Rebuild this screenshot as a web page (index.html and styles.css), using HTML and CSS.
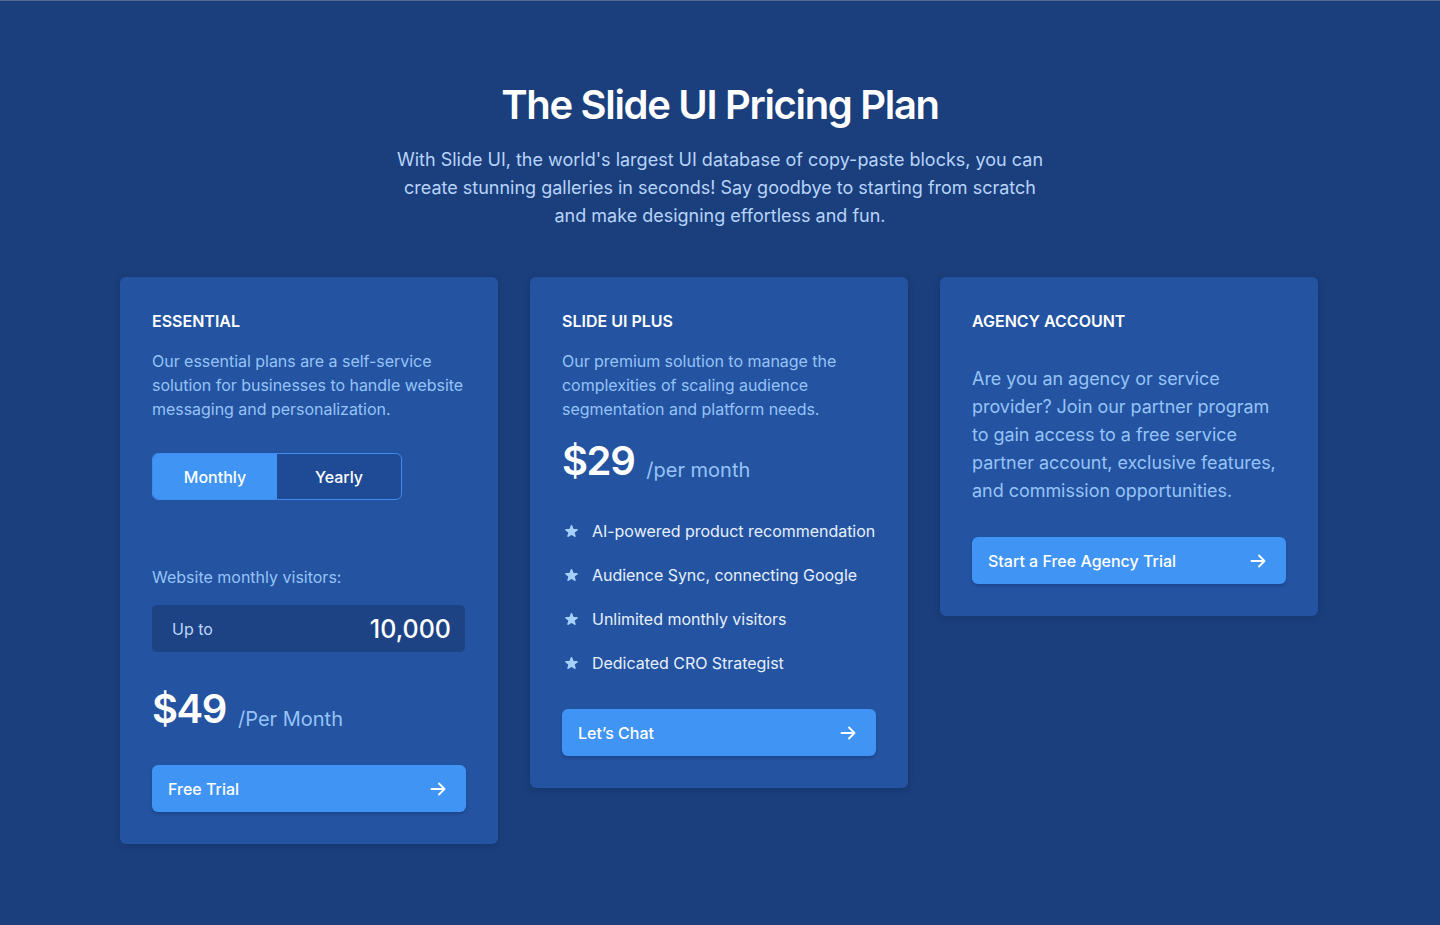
FILE: index.html
```html
<!DOCTYPE html>
<html lang="en">
<head>
<meta charset="utf-8">
<title>The Slide UI Pricing Plan</title>
<link rel="stylesheet" href="styles.css">
</head>
<body>
<section class="pricing">
  <header class="intro">
    <h1 class="intro-title">The Slide UI Pricing Plan</h1>
    <p class="intro-text">With Slide UI, the world's largest UI database of copy-paste blocks, you can create stunning galleries in seconds! Say goodbye to starting from scratch and make designing effortless and fun.</p>
  </header>
  <div class="cards">
    <article class="card">
      <h2 class="card-title">ESSENTIAL</h2>
      <p class="card-desc">Our essential plans are a self-service solution for businesses to handle website messaging and personalization.</p>
      <div class="toggle">
        <button class="toggle-btn active">Monthly</button>
        <button class="toggle-btn">Yearly</button>
      </div>
      <p class="visitors-label">Website monthly visitors:</p>
      <div class="visitors-box">
        <span class="visitors-up">Up to</span>
        <span class="visitors-num">10,000</span>
      </div>
      <div class="price price-essential">
        <span class="price-amount">$49</span>
        <span class="price-period">/Per Month</span>
      </div>
      <a class="cta cta-essential" href="#">
        <span>Free Trial</span>
        <svg class="arrow" width="20" height="20" viewBox="0 0 20 20" fill="none" stroke="currentColor" stroke-width="1.8" stroke-linecap="round" stroke-linejoin="round"><path d="M3.5 10h13M11 4.5l5.5 5.5-5.5 5.5"/></svg>
      </a>
    </article>

    <article class="card">
      <h2 class="card-title">SLIDE UI PLUS</h2>
      <p class="card-desc">Our premium solution to manage the complexities of scaling audience segmentation and platform needs.</p>
      <div class="price price-plus">
        <span class="price-amount">$29</span>
        <span class="price-period">/per month</span>
      </div>
      <ul class="features">
        <li class="feature"><svg class="star" width="17" height="17" viewBox="0 0 20 20" fill="currentColor"><path d="M9.05 2.93c.3-.92 1.6-.92 1.9 0l1.07 3.3a1 1 0 0 0 .95.69h3.47c.97 0 1.37 1.24.59 1.81l-2.81 2.04a1 1 0 0 0-.36 1.12l1.07 3.3c.3.92-.76 1.69-1.54 1.12l-2.8-2.04a1 1 0 0 0-1.18 0l-2.8 2.04c-.79.57-1.84-.2-1.54-1.12l1.07-3.3a1 1 0 0 0-.36-1.12L2.97 8.73c-.78-.57-.38-1.81.59-1.81h3.47a1 1 0 0 0 .95-.69l1.07-3.3z"/></svg><span>AI-powered product recommendation</span></li>
        <li class="feature"><svg class="star" width="17" height="17" viewBox="0 0 20 20" fill="currentColor"><path d="M9.05 2.93c.3-.92 1.6-.92 1.9 0l1.07 3.3a1 1 0 0 0 .95.69h3.47c.97 0 1.37 1.24.59 1.81l-2.81 2.04a1 1 0 0 0-.36 1.12l1.07 3.3c.3.92-.76 1.69-1.54 1.12l-2.8-2.04a1 1 0 0 0-1.18 0l-2.8 2.04c-.79.57-1.84-.2-1.54-1.12l1.07-3.3a1 1 0 0 0-.36-1.12L2.97 8.73c-.78-.57-.38-1.81.59-1.81h3.47a1 1 0 0 0 .95-.69l1.07-3.3z"/></svg><span>Audience Sync, connecting Google</span></li>
        <li class="feature"><svg class="star" width="17" height="17" viewBox="0 0 20 20" fill="currentColor"><path d="M9.05 2.93c.3-.92 1.6-.92 1.9 0l1.07 3.3a1 1 0 0 0 .95.69h3.47c.97 0 1.37 1.24.59 1.81l-2.81 2.04a1 1 0 0 0-.36 1.12l1.07 3.3c.3.92-.76 1.69-1.54 1.12l-2.8-2.04a1 1 0 0 0-1.18 0l-2.8 2.04c-.79.57-1.84-.2-1.54-1.12l1.07-3.3a1 1 0 0 0-.36-1.12L2.97 8.73c-.78-.57-.38-1.81.59-1.81h3.47a1 1 0 0 0 .95-.69l1.07-3.3z"/></svg><span>Unlimited monthly visitors</span></li>
        <li class="feature"><svg class="star" width="17" height="17" viewBox="0 0 20 20" fill="currentColor"><path d="M9.05 2.93c.3-.92 1.6-.92 1.9 0l1.07 3.3a1 1 0 0 0 .95.69h3.47c.97 0 1.37 1.24.59 1.81l-2.81 2.04a1 1 0 0 0-.36 1.12l1.07 3.3c.3.92-.76 1.69-1.54 1.12l-2.8-2.04a1 1 0 0 0-1.18 0l-2.8 2.04c-.79.57-1.84-.2-1.54-1.12l1.07-3.3a1 1 0 0 0-.36-1.12L2.97 8.73c-.78-.57-.38-1.81.59-1.81h3.47a1 1 0 0 0 .95-.69l1.07-3.3z"/></svg><span>Dedicated CRO Strategist</span></li>
      </ul>
      <a class="cta cta-plus" href="#">
        <span>Let’s Chat</span>
        <svg class="arrow" width="20" height="20" viewBox="0 0 20 20" fill="none" stroke="currentColor" stroke-width="1.8" stroke-linecap="round" stroke-linejoin="round"><path d="M3.5 10h13M11 4.5l5.5 5.5-5.5 5.5"/></svg>
      </a>
    </article>

    <article class="card">
      <h2 class="card-title">AGENCY ACCOUNT</h2>
      <p class="card-desc card-desc-lg">Are you an agency or service provider? Join our partner program to gain access to a free service partner account, exclusive features, and commission opportunities.</p>
      <a class="cta cta-agency" href="#">
        <span>Start a Free Agency Trial</span>
        <svg class="arrow" width="20" height="20" viewBox="0 0 20 20" fill="none" stroke="currentColor" stroke-width="1.8" stroke-linecap="round" stroke-linejoin="round"><path d="M3.5 10h13M11 4.5l5.5 5.5-5.5 5.5"/></svg>
      </a>
    </article>
  </div>
</section>
</body>
</html>
```

FILE: styles.css
```css
* { box-sizing: border-box; }

html, body {
  margin: 0;
  padding: 0;
}

body {
  background: #1b3f7c;
  font-family: Inter, "Noto Sans", "Liberation Sans", sans-serif;
  color: #ffffff;
  min-height: 925px;
  border-top: 1px solid #56698f;
}

.pricing {
  width: 1200px;
  margin: 0 auto;
  padding: 80px 0 60px;
}

.intro {
  display: flex;
  flex-direction: column;
  align-items: center;
  text-align: center;
}

.intro-title {
  margin: 0;
  font-size: 40px;
  line-height: 48px;
  font-weight: 600;
  letter-spacing: -0.033em;
  color: #ffffff;
}

.intro-text {
  margin: 17px 0 0;
  width: 660px;
  font-size: 18px;
  line-height: 28px;
  color: #b7d4fb;
}

.cards {
  margin-top: 47px;
  display: grid;
  grid-template-columns: repeat(3, 378px);
  gap: 32px;
  align-items: start;
}

.card {
  background: #2353a1;
  border-radius: 6px;
  padding: 32px;
  box-shadow: 0 2px 6px rgba(10, 30, 70, 0.25);
  display: flex;
  flex-direction: column;
}

.card-title {
  margin: 0;
  font-size: 16px;
  line-height: 24px;
  font-weight: 600;
  color: #ffffff;
}

.card-desc {
  margin: 16px 0 0;
  font-size: 16px;
  line-height: 24px;
  color: #96c3f7;
  letter-spacing: -0.03px;
}

.card-desc-lg {
  margin-top: 32px;
  font-size: 18px;
  line-height: 28px;
  letter-spacing: -0.04px;
}

.toggle {
  margin-top: 32px;
  display: flex;
  width: 250px;
  height: 47px;
  border: 1px solid #3f8cec;
  border-radius: 6px;
  overflow: hidden;
  background: #1f4a95;
}

.toggle-btn {
  flex: 1;
  border: 0;
  background: transparent;
  color: #ffffff;
  font-family: inherit;
  font-size: 16px;
  font-weight: 500;
  cursor: pointer;
}

.toggle-btn.active {
  background: #4094f3;
}

.visitors-label {
  margin: 65px 0 0;
  font-size: 16px;
  line-height: 24px;
  color: #96c3f7;
}

.visitors-box {
  margin-top: 16px;
  height: 47px;
  width: 313px;
  background: #1d4385;
  border-radius: 5px;
  display: flex;
  align-items: center;
  justify-content: space-between;
  padding: 0 14px 0 20px;
}

.visitors-up {
  font-size: 16px;
  color: #bcd6f8;
}

.visitors-num {
  font-size: 25px;
  font-weight: 500;
  color: #ffffff;
}

.price {
  display: flex;
  align-items: baseline;
  gap: 12px;
}

.price-essential { margin-top: 33px; }
.price-plus { margin-top: 16px; }

.price-amount {
  font-size: 40px;
  line-height: 48px;
  font-weight: 600;
  letter-spacing: -0.035em;
  color: #ffffff;
}

.price-period {
  font-size: 20px;
  color: #96c3f7;
}

.price-essential .price-period { position: relative; top: 3px; }
.price-plus .price-period { position: relative; top: 2px; }

.features {
  list-style: none;
  margin: 34px 0 0;
  padding: 0;
  display: flex;
  flex-direction: column;
  gap: 20px;
}

.feature {
  display: flex;
  align-items: center;
  gap: 12px;
  font-size: 16px;
  line-height: 24px;
  color: #e6f0fd;
  white-space: nowrap;
  letter-spacing: -0.03px;
}

.star {
  color: #a6d0fb;
  flex: none;
  margin-left: 1px;
}

.cta {
  display: flex;
  align-items: center;
  justify-content: space-between;
  width: 314px;
  height: 47px;
  padding: 0 18px 0 16px;
  background: #4094f3;
  border-radius: 6px;
  color: #ffffff;
  text-decoration: none;
  font-size: 16px;
  font-weight: 500;
  box-shadow: 0 2px 3px rgba(15, 40, 90, 0.3);
}

.cta-essential { margin-top: 32px; }
.cta-plus { margin-top: 34px; }
.cta-agency { margin-top: 32px; }

.arrow { flex: none; }
```
